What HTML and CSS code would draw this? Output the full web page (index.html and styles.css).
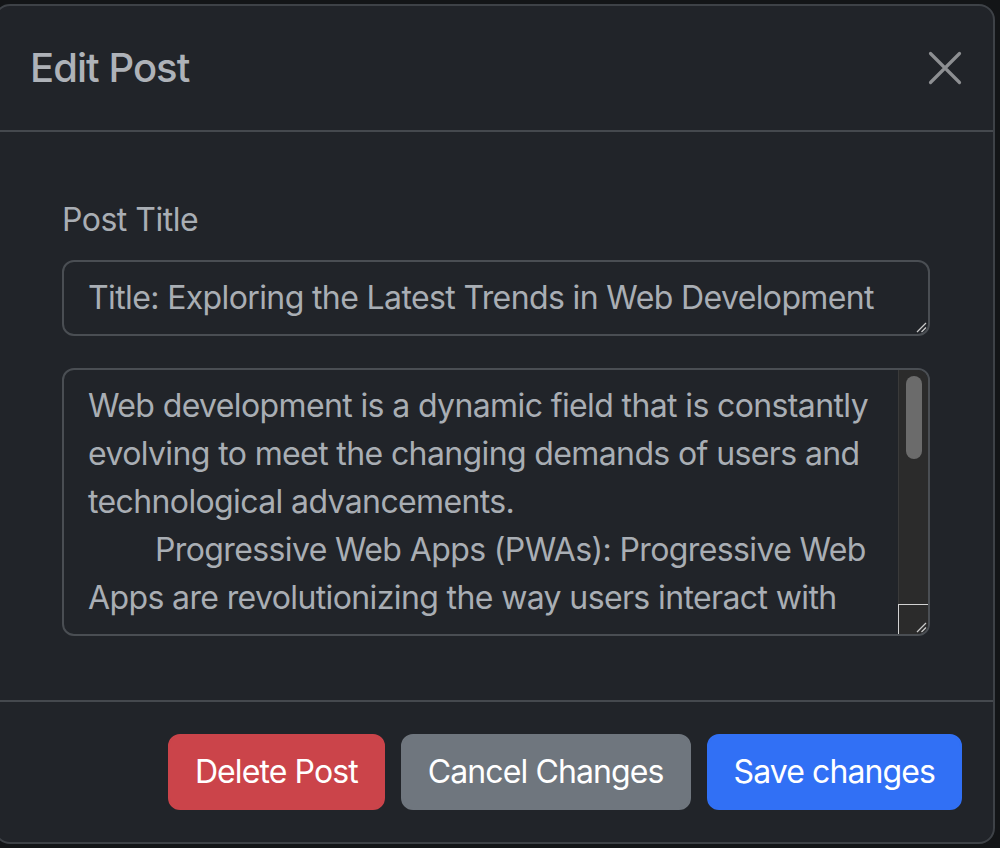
FILE: index.html
```html
<!DOCTYPE html>
<html lang="en">
<head>
<meta charset="utf-8">
<title>Edit Post</title>
<link rel="stylesheet" href="styles.css">
</head>
<body>
<div class="backdrop">
  <div class="modal">
    <div class="modal-header">
      <h5 class="modal-title">Edit Post</h5>
      <button class="btn-close" aria-label="Close">
        <svg viewBox="0 0 34 34" width="34" height="34"><path d="M2.5 2.5L31.5 31.5M31.5 2.5L2.5 31.5" stroke="#8d8f92" stroke-width="3.2" stroke-linecap="round" fill="none"/></svg>
      </button>
    </div>
    <div class="modal-body">
      <label class="form-label">Post Title</label>
      <div class="field field-title">
        <div class="field-text">Title: Exploring the Latest Trends in Web Development</div>
        <svg class="grip" viewBox="0 0 12 12" width="12" height="12"><path d="M2 11L11 2M6.5 11L11 6.5" stroke="#c9c9c9" stroke-width="1.3" fill="none"/></svg>
      </div>
      <div class="field field-content">
        <div class="field-text multi">
          <div class="line">Web development is a dynamic field that is constantly</div>
          <div class="line">evolving to meet the changing demands of users and</div>
          <div class="line">technological advancements.</div>
          <div class="line indent">Progressive Web Apps (PWAs): Progressive Web</div>
          <div class="line">Apps are revolutionizing the way users interact with</div>
        </div>
        <div class="scrollbar">
          <div class="thumb"></div>
          <div class="track-space"></div>
          <div class="corner">
            <svg viewBox="0 0 12 12" width="12" height="12"><path d="M2 11L11 2M6.5 11L11 6.5" stroke="#c9c9c9" stroke-width="1.3" fill="none"/></svg>
          </div>
        </div>
      </div>
    </div>
    <div class="modal-footer">
      <button class="btn btn-danger">Delete Post</button>
      <button class="btn btn-secondary">Cancel Changes</button>
      <button class="btn btn-primary">Save changes</button>
    </div>
  </div>
</div>
</body>
</html>
```

FILE: styles.css
```css
* { box-sizing: border-box; }

html, body {
  margin: 0;
  padding: 0;
  background: #131517;
  overflow: hidden;
}

body {
  font-family: Inter, "Noto Sans", "Liberation Sans", sans-serif;
  color: #a9aeb4;
}

.backdrop {
  width: 1000px;
  height: 848px;
  padding-top: 4px;
  overflow: hidden;
}

.modal {
  width: 1001px;
  height: 840px;
  margin-left: -6px;
  background: #212429;
  border: 2px solid #3e4247;
  border-radius: 16px;
  display: flex;
  flex-direction: column;
}

.modal-header {
  height: 126px;
  flex: none;
  display: flex;
  align-items: center;
  justify-content: space-between;
  padding: 0 31px 0 34px;
  border-bottom: 2px solid #45494e;
}

.modal-title {
  margin: 0;
  font-size: 40px;
  font-weight: 500;
  line-height: 48px;
  color: #aeb2b8;
  letter-spacing: -0.95px;
}

.btn-close {
  width: 34px;
  height: 34px;
  padding: 0;
  border: 0;
  background: transparent;
  display: flex;
}

.modal-body {
  flex: 1;
  padding: 64px 63px 0 66px;
  display: flex;
  flex-direction: column;
}

.form-label {
  display: block;
  font-size: 32px;
  line-height: 48px;
  margin-bottom: 16px;
  color: #a9aeb4;
  letter-spacing: -0.5px;
}

.field {
  border: 2px solid #4a4e53;
  border-radius: 12px;
  background: #212429;
  font-size: 32px;
  line-height: 48px;
  color: #a9aeb4;
  overflow: hidden;
  letter-spacing: -0.62px;
}

.field-title {
  position: relative;
  height: 76px;
  padding: 12px 24px 12px 24px;
  margin-bottom: 32px;
}

.field-text {
  white-space: nowrap;
}

.grip {
  position: absolute;
  right: 1px;
  bottom: 1px;
}

.field-content {
  height: 268px;
  display: flex;
}

.multi {
  flex: 1;
  padding: 12px 0 0 24px;
  overflow: hidden;
}

.line.indent {
  padding-left: 67px;
}

.scrollbar {
  width: 30px;
  flex: none;
  background: #2b2b2b;
  border-left: 1px solid #3a3a3a;
  display: flex;
  flex-direction: column;
}

.thumb {
  height: 83px;
  margin: 6px 6px 0 7px;
  border-radius: 8px;
  background: #6b6b6b;
}

.track-space {
  flex: 1;
}

.corner {
  height: 30px;
  border-top: 1px solid #d2d2d2;
  border-left: 1px solid #d2d2d2;
  margin-left: -1px;
  display: flex;
  align-items: flex-end;
  justify-content: flex-end;
  padding: 0 1px 1px 0;
}

.modal-footer {
  flex: none;
  height: 142px;
  border-top: 2px solid #45494e;
  display: flex;
  align-items: center;
  justify-content: flex-end;
  gap: 16px;
  padding: 0 31px 0 0;
}

.btn {
  height: 76px;
  font-family: inherit;
  font-size: 32px;
  line-height: 48px;
  padding: 12px 25px;
  border-radius: 12px;
  border: 2px solid transparent;
  color: #ffffff;
  letter-spacing: -0.9px;
}

.btn-danger {
  background: #cb444a;
  border-color: #cb444a;
}

.btn-secondary {
  background: #6f767e;
  border-color: #6f767e;
}

.btn-primary {
  background: #3170f5;
  border-color: #3170f5;
}
```
